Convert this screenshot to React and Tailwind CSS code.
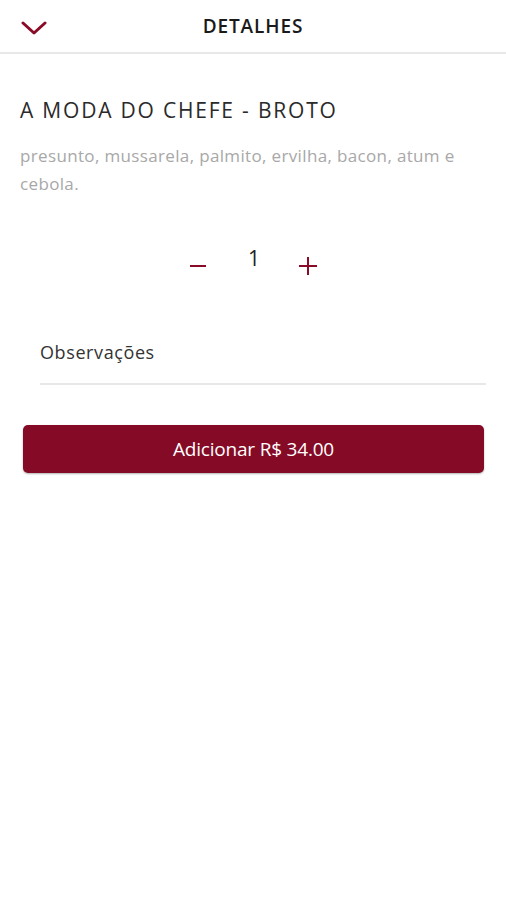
import React from "react";

export default function App() {
  return (
    <div className="min-h-[900px] w-full bg-white" style={{ fontFamily: "'Open Sans', 'Noto Sans', sans-serif" }}>
      <header className="relative flex h-[54px] items-center justify-center border-b-2 border-[#e8e8e8]">
        <button className="absolute left-[21px] top-[20px]">
          <svg width="26" height="16" viewBox="0 0 26 16" fill="none">
            <path d="M2 3 L13 13 L24 3" stroke="#8a0b27" strokeWidth="3" strokeLinecap="round" strokeLinejoin="round" />
          </svg>
        </button>
        <h1 className="text-[19px] font-semibold tracking-[0.9px] text-[#1a1a1a]">DETALHES</h1>
      </header>

      <main className="px-[20px]">
        <h2 className="mt-[42px] text-[21px] font-normal leading-[28px] tracking-[1.8px] text-[#2a2a2a]">A MODA DO CHEFE - BROTO</h2>
        <p className="mt-[18px] text-[17px] leading-[28px] tracking-[0.35px] text-[#a8a8a8]">
          presunto, mussarela, palmito, ervilha, bacon, atum e cebola.
        </p>

        <div className="mt-[58px] flex items-center justify-center">
          <button className="flex h-[20px] w-[20px] items-center justify-center">
            <span className="block h-[2px] w-[16px] bg-[#8a0b27]" />
          </button>
          <span className="ml-[40px] mr-[38px] -mt-[14px] text-[21px] text-[#222]">1</span>
          <button className="relative flex h-[20px] w-[20px] items-center justify-center">
            <span className="absolute block h-[2px] w-[18px] bg-[#8a0b27]" />
            <span className="absolute block h-[18px] w-[2px] bg-[#8a0b27]" />
          </button>
        </div>

        <div className="ml-[20px] mt-[63px] border-b-2 border-[#e8e8e8] pb-[17px]">
          <span className="text-[18px] tracking-[0.6px] text-[#333]">Observações</span>
        </div>

        <button className="mx-[3px] mt-[40px] flex h-[48px] w-[461px] items-center justify-center rounded-[5px] bg-[#850a25] text-[19px] tracking-[-0.2px] text-white shadow-[0_1px_2px_rgba(0,0,0,0.3)]">
          Adicionar R$ 34.00
        </button>
      </main>
    </div>
  );
}
